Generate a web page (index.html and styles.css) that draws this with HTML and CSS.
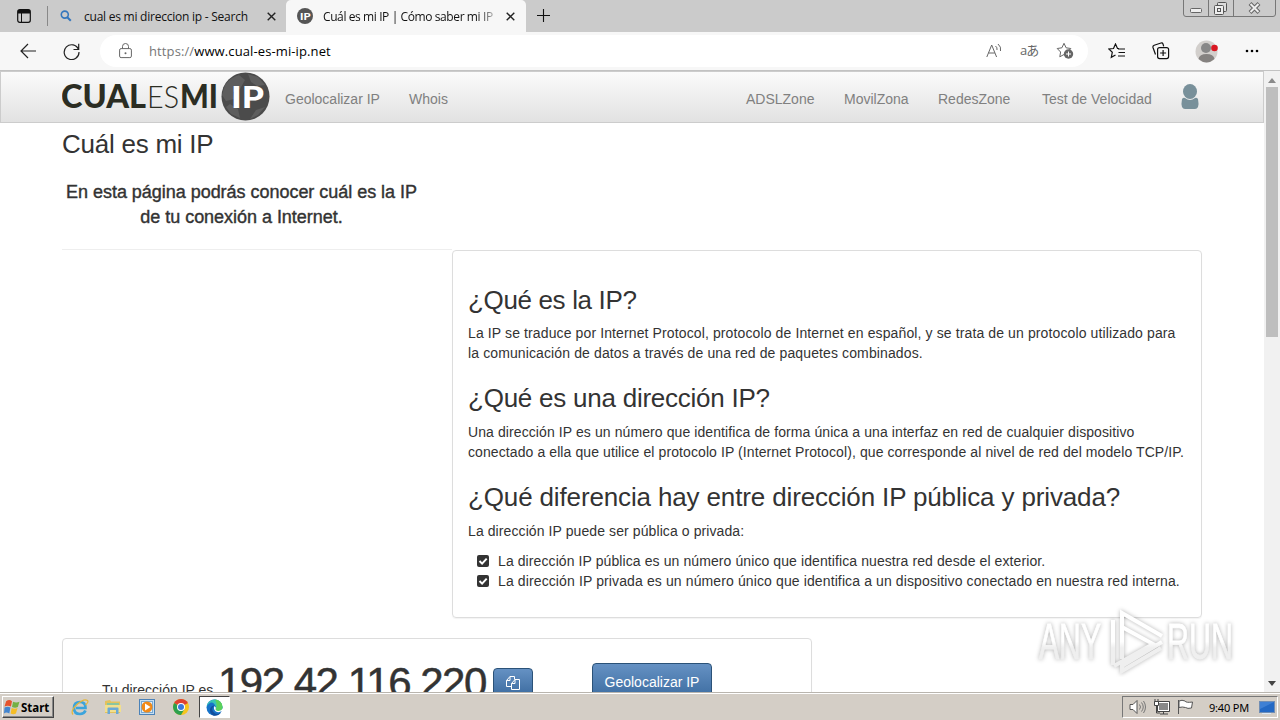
FILE: index.html
```html
<!DOCTYPE html>
<html lang="es">
  <head>
    <meta charset="UTF-8" />
    <title>Cuál es mi IP | Cómo saber mi IP</title>
    <link rel="stylesheet" href="styles.css">
  </head>
  <body>
    <!-- Pestañas -->
    <div class="tabs">
      <svg class="tab-menu" width="14" height="14" viewBox="0 0 14 14"><rect x=".7" y=".7" width="12.6" height="12.6" rx="2" fill="none" stroke="#111" stroke-width="1.2"/><path d="M1 1h12v3.500H1z" fill="#111"/><path d="M4.500 4v9" stroke="#111"/></svg>
      <div class="tab">
        <svg width="12" height="12" viewBox="0 0 12 12"><circle cx="4.800" cy="4.600" r="3.500" fill="none" stroke="#3577bd" stroke-width="1.600"/><path d="M7.300 7.200l3.500 3.500" stroke="#3577bd" stroke-width="2"/></svg>
        <span class="tab-title t1">cual es mi direccion ip - Search</span>
        <svg class="close" width="9" height="9" viewBox="0 0 9 9"><path d="M.7.7l7.600 7.600M8.300.7L.7 8.300" stroke="#222" stroke-width="1.400"/></svg>
      </div>
      <div class="tab active">
        <svg width="16" height="16" viewBox="0 0 16 16"><circle cx="8" cy="8" r="8" fill="#555"/><text x="3" y="12" class="fav" textLength="10.500" lengthAdjust="spacingAndGlyphs">IP</text></svg>
        <span class="tab-title t2">Cuál es mi IP | Cómo saber mi IP</span>
        <svg class="close" width="9" height="9" viewBox="0 0 9 9"><path d="M.7.7l7.600 7.600M8.300.7L.7 8.300" stroke="#222" stroke-width="1.400"/></svg>
      </div>
      <svg class="plus" width="15" height="15" viewBox="0 0 15 15"><path d="M7.500 1v13M1 7.500h13" stroke="#111" stroke-width="1.100"/></svg>
      <svg class="winbtns" width="94" height="18" viewBox="0 0 94 18" fill="none">
        <path d="M.5 0v14q0 2.500 2.500 2.500h87q2.500 0 2.500-2.500V0M25.500 0v16M50.500 0v16" stroke="#777"/>
        <rect x="7.500" y="8.500" width="11" height="4" rx="1" fill="#eee" stroke="#666"/>
        <rect x="34.500" y="2.500" width="9" height="9" rx="1" fill="#ddd" stroke="#555"/>
        <rect x="31.500" y="5.500" width="9" height="9" rx="1" fill="#eee" stroke="#555"/><rect x="34.500" y="8.500" width="3" height="3" stroke="#555"/>
        <path d="M67 3.500l9 9M76 3.500l-9 9" stroke="#666" stroke-width="4"/><path d="M67.500 4l8 8M75.500 4l-8 8" stroke="#eee" stroke-width="2"/>
      </svg>
    </div>

    <!-- Barra de direcciones -->
    <div class="toolbar">
      <svg class="back" width="17" height="16" viewBox="0 0 17 16"><path d="M8 1L1 8l7 7M1 8h15" fill="none" stroke="#222" stroke-width="1.200"/></svg>
      <svg class="reload" width="17" height="17" viewBox="0 0 17 17"><path d="M15.500 6.500A7.400 7.400 0 1 0 16 9M15.700.8v5.700H10.500" fill="none" stroke="#222" stroke-width="1.200"/></svg>
      <div class="address">
        <svg width="13" height="16" viewBox="0 0 13 16"><rect x=".6" y="5.600" width="11.800" height="9" rx="1.500" fill="none" stroke="#666"/><path d="M3.500 5.500V3.500a3 3 0 0 1 6 0v2" fill="none" stroke="#666"/><circle cx="6.500" cy="10.200" r="1" fill="#666"/></svg>
        <span class="url"><span>https://</span>www.cual-es-mi-ip.net</span>
        <svg class="read" width="16" height="16" viewBox="0 0 16 16" fill="none" stroke="#666"><path d="M.8 14L5.700 2l4.900 12M2.600 10h6.200"/><path d="M9.500 3q2 1.500 1.500 4M12 1q3.500 2.800 2.500 7"/></svg>
        <span class="translate">aあ</span>
        <svg class="fav-add" width="18" height="18" viewBox="0 0 18 18"><path d="M8 12.500l-4.200 2.300.8-4.800L1.200 6.500l4.700-.7L8 1.300l2.100 4.500 4.700.7-2 2" fill="none" stroke="#666"/><circle cx="12.500" cy="12" r="4.700" fill="#666"/><path d="M12.500 9.500v5M10 12h5" stroke="#fff"/></svg>
      </div>
      <svg class="favs" width="18" height="16" viewBox="0 0 18 16" fill="none" stroke="#111" stroke-width="1.200"><path d="M11 5.500H9.500L7.500 1 5.500 5.500.8 6l3.500 3.300-1 5L7.500 12M10 6h7M10.500 9.500H17M10 13h7"/></svg>
      <svg class="collections" width="18" height="18" viewBox="0 0 18 18" fill="none" stroke="#111" stroke-width="1.200"><path d="M3.500 12.500L1 5.500Q.6 3.800 2.200 3.200L9 1q1.500-.4 2 1l.7 2.300"/><rect x="5.600" y="5.600" width="11" height="11" rx="2"/><path d="M11.100 8v6M8.100 11h6"/></svg>
      <svg class="avatar" width="24" height="23" viewBox="0 0 24 23"><circle cx="11.500" cy="11.500" r="11" fill="#d2cfcc"/><circle cx="11" cy="8" r="5" fill="#888"/><path d="M3.500 19q1-5 8-5t8 5q-8 7-16 0" fill="#858280"/><circle cx="19.500" cy="8" r="3.300" fill="#d91722"/></svg>
      <svg class="dots" width="14" height="4" viewBox="0 0 14 4"><circle cx="2" cy="2" r="1.300"/><circle cx="7" cy="2" r="1.300"/><circle cx="12" cy="2" r="1.300"/></svg>
    </div>

    <!-- Página -->
    <div class="viewport">
      <div class="page">
        <div class="navbar">
          <svg class="logo" width="209" height="50" viewBox="0 0 209 50">
            <text x="-1" y="36" class="black" textLength="85" lengthAdjust="spacingAndGlyphs">CUAL</text>
            <text x="85" y="36" class="light" textLength="32" lengthAdjust="spacingAndGlyphs">ES</text>
            <text x="118" y="36" class="black" textLength="38" lengthAdjust="spacingAndGlyphs">MI</text>
            <circle cx="183.500" cy="24.500" r="24" fill="#4b4b4b"/>
            <path d="M163 13q6-8 14-10l6 5-5 9-7 3 1 7-8 2-4-6zM186 2l10 3 7 8-8 1-6-4zM168 32l8 5 2 9-9-4-5-7zM194 38l9-3-7 8-8 4z" fill="#5e5e5e"/>
            <text x="169" y="36" class="ip" textLength="33" lengthAdjust="spacingAndGlyphs">IP</text>
          </svg>
          <a class="n1">Geolocalizar IP</a>
          <a class="n2">Whois</a>
          <a class="n3">ADSLZone</a>
          <a class="n4">MovilZona</a>
          <a class="n5">RedesZone</a>
          <a class="n6">Test de Velocidad</a>
          <svg class="user" width="18" height="25" viewBox="0 0 18 25" fill="#78909a"><path d="M1 15q1.500-2 3-1 5 4 10 0 1.500-1 3 1 1 5 0 8-1 2-3 2H4q-2 0-3-2-1-3 0-8z"/><ellipse cx="9" cy="7.500" rx="7" ry="7.500"/></svg>
        </div>
        <div class="container">
          <div class="top">
            <div class="left">
              <h1>Cuál es mi IP</h1>
              <p class="lead">En esta página podrás conocer cuál es la IP<br />de tu conexión a Internet.</p>
              <hr />
            </div>
            <div class="card info">
              <h2 class="q1">¿Qué es la IP?</h2>
              <p><span class="l1">La IP se traduce por Internet Protocol, protocolo de Internet en español, y se trata de un protocolo utilizado para</span><br /><span class="l2">la comunicación de datos a través de una red de paquetes combinados.</span></p>
              <h2 class="q2">¿Qué es una dirección IP?</h2>
              <p><span class="l3">Una dirección IP es un número que identifica de forma única a una interfaz en red de cualquier dispositivo</span><br /><span class="l4">conectado a ella que utilice el protocolo IP (Internet Protocol), que corresponde al nivel de red del modelo TCP/IP.</span></p>
              <h2 class="q3">¿Qué diferencia hay entre dirección IP pública y privada?</h2>
              <p><span class="l5">La dirección IP puede ser pública o privada:</span></p>
              <ul>
                <li><svg width="12" height="12" viewBox="0 0 12 12"><rect width="12" height="12" rx="2" fill="#333"/><path d="M2.500 6l2.600 2.600 4.600-5" fill="none" stroke="#fff" stroke-width="2"/></svg><span class="l6">La dirección IP pública es un número único que identifica nuestra red desde el exterior.</span></li>
                <li><svg width="12" height="12" viewBox="0 0 12 12"><rect width="12" height="12" rx="2" fill="#333"/><path d="M2.500 6l2.600 2.600 4.600-5" fill="none" stroke="#fff" stroke-width="2"/></svg><span class="l7">La dirección IP privada es un número único que identifica a un dispositivo conectado en nuestra red interna.</span></li>
              </ul>
            </div>
          </div>
          <div class="card result">
            <span class="your">Tu dirección IP es</span>
            <span class="number">192.42.116.220</span>
            <a class="btn copy"><svg width="14" height="14" viewBox="0 0 14 14" fill="none" stroke="#fff"><path d="M5 10.500H.5v-6l3.500-4h4.500v3M.5 4.500H4v-4M5.500 7.500l3.500-4h4.500v10h-8zM5.500 7.500H9v-4"/></svg></a>
            <a class="btn geo">Geolocalizar IP</a>
          </div>
        </div>
      </div>
      <div class="scrollbar">
        <svg width="8" height="5" viewBox="0 0 8 5"><path d="M0 5l4-5 4 5z" fill="#8a8a8a"/></svg>
        <div class="thumb"></div>
        <svg width="8" height="5" viewBox="0 0 8 5"><path d="M0 0l4 5 4-5z" fill="#444"/></svg>
      </div>
    </div>

    <!-- Barra de tareas -->
    <div class="taskbar">
      <div class="start">
        <svg width="16" height="16" viewBox="0 0 15 15"><path d="M2 2q3-2 5.500 0L6.500 7q-3-1.500-6 0z" fill="#e5532d"/><path d="M8.500 2.500q3 1.500 6 0l-1.500 5q-2.500 1.500-5.500 0z" fill="#75b043"/><path d="M.5 8q3-1.500 5.500 0l-1 5.500q-3-1.500-5 0z" fill="#4385cf"/><path d="M7.200 8.500q3 1.500 5.500 0l-1.500 5q-2.500 1.500-5 0z" fill="#f5bd25"/></svg>
        <span>Start</span>
      </div>
      <svg class="ie" width="18" height="17" viewBox="0 0 18 17" fill="none"><path d="M14.500 11.500Q13 15 9 15q-6 0-6-6t6-6q5.500 0 5.500 6H5" stroke="#3ba4dc" stroke-width="2.700"/><path d="M2 15.500Q-1 12 6 5.500T16.500 1.500Q18 3 14.500 6" stroke="#e5b63a" stroke-width="1.200"/></svg>
      <svg class="folder" width="16" height="16" viewBox="0 0 16 16"><path d="M0 2l5-1 1 1.500h9V14H0z" fill="#e3c25c"/><path d="M2 4h12v3H2z" fill="#8ac5a0"/><path d="M0 6h16v7H0z" fill="#f2df8d"/><path d="M2.500 15V9.500q0-1 1-1h9q1 0 1 1V15h-2.500v-4H5v4z" fill="#6ba9d6"/></svg>
      <svg class="media" width="16" height="16" viewBox="0 0 16 16"><rect x=".5" y=".5" width="15" height="15" fill="#c6dff2" stroke="#4b82b8"/><rect x="2.500" y="2.500" width="11" height="11" fill="#e6f1fa" stroke="#78a9d3"/><circle cx="8" cy="8" r="5.500" fill="#f18a18"/><path d="M6 4.500l5.500 3.500L6 11.500z" fill="#fff"/></svg>
      <svg class="chrome" width="16" height="16" viewBox="0 0 16 16"><circle cx="8" cy="8" r="8" fill="#f6c51e"/><path d="M8 8L1.100 4A8 8 0 0 1 14.900 4z" fill="#df4232"/><path d="M1.100 4A8 8 0 0 0 8 16l3.500-6z" fill="#2da04e"/><circle cx="8" cy="8" r="4" fill="#fff"/><circle cx="8" cy="8" r="3" fill="#3b79dc"/></svg>
      <div class="running">
        <svg width="17" height="17" viewBox="0 0 17 17"><circle cx="8.500" cy="8.500" r="8" fill="#1673c9"/><path d="M.6 7.500A8 8 0 0 1 16.500 8q.2 4-4.500 4-2.500 0-2.500-1.500Q11 9.500 10 8 6-.5.6 7.500z" fill="#38c4b4"/><path d="M9 .5q7 .5 7.500 7.500 0 4-4.500 4-2.500 0-2.500-1.500Q12 6 9 .5z" fill="#5bd15b"/><path d="M8.500 6.500Q4 10 8.500 14q3 2 6.500-.5-3 4-8 3Q2 13 5 8q1.500-2 3.500-1.500z" fill="#124f9c"/><path d="M8.500 7q-1.500 3 1 5.200 3 1.800 6.200.1l1.300 1V9.500l-1 1q-2 2-5 1.300-2-.5-1.300-1.800Q10.500 8.500 8.500 7z" fill="#fff"/></svg>
      </div>
      <div class="tray">
        <svg width="17" height="16" viewBox="0 0 17 16" fill="none" stroke="#555"><path d="M1 5.500h3l4-4v13l-4-4H1z" fill="#fff"/><path d="M10.500 5.500q2 2.500 0 5M12.500 3.500q3.500 4.500 0 9M14.500 2q4 6 0 12" stroke="#777"/></svg>
        <svg width="17" height="16" viewBox="0 0 17 16"><rect x="5.500" y="3.500" width="10" height="8" fill="#888" stroke="#fff"/><path d="M4.500 2.500h12v10h-12zM7 15h8M10.500 12.500V15M3.500 7v7H7" fill="none" stroke="#444"/><path d="M1.500 2.500h4v4h-4zM2 0v3M5 0v3" fill="#fff" stroke="#444"/></svg>
        <svg width="17" height="16" viewBox="0 0 17 16"><path d="M1.500 1v14M2 2q3-1.500 6 0 1 2 7.500 1l-1 6q-4 1-6-.5-3-1-6.500 0z" fill="#fff" stroke="#555"/></svg>
        <span class="clock">9:40 PM</span>
        <svg class="desk" width="16" height="13" viewBox="0 0 16 13"><rect x=".5" y=".5" width="15" height="11" fill="#2469c4" stroke="#718eb4"/><path d="M1 1h14L1 8z" fill="#3f80d4"/><path d="M3 12.500h9" stroke="#dbe8f5"/></svg>
      </div>
    </div>

    <!-- Marca de agua -->
    <svg class="watermark" width="204" height="72" viewBox="0 0 204 72">
      <defs>
        <linearGradient id="fade" gradientUnits="userSpaceOnUse" x1="0" y1="5" x2="0" y2="68">
          <stop offset=".5" stop-color="#fff"/>
          <stop offset=".6" stop-color="#efefef"/>
        </linearGradient>
      </defs>
      <g class="wm">
        <text x="5" y="54" textLength="62" lengthAdjust="spacingAndGlyphs">ANY</text>
        <text x="133" y="54" textLength="66" lengthAdjust="spacingAndGlyphs">RUN</text>
        <path d="M79 60V15M88 54V8L128 31M88 22l31 17-39 22M128 37L88 61v5l39-23"/>
      </g>
    </svg>
  </body>
</html>
```

FILE: styles.css
```css
* {
  box-sizing: border-box;
}
body {
  margin: 0;
  width: 1280px;
  height: 720px;
  overflow: hidden;
  position: relative;
  display: flex;
  flex-direction: column;
  background: #fff;
  color: #333;
  font-family: 'Liberation Sans', Arial, sans-serif;
  font-size: 14px;
}
svg {
  display: block;
  flex: none;
}
a,
span {
  white-space: nowrap;
}

/* Pestañas */
.tabs {
  height: 32px;
  display: flex;
  align-items: flex-start;
  background: #cbcbcb;
  font: 12px 'Open Sans', 'Noto Sans', sans-serif;
  color: #111;
}
.tab-menu {
  margin: 9px 16px 0 17px;
}
.tab {
  width: 239px;
  height: 32px;
  display: flex;
  align-items: center;
  padding: 0 10px 0 13px;
  position: relative;
}
.tab:not(.active)::before {
  content: '';
  position: absolute;
  left: 0;
  top: 6px;
  height: 20px;
  border-left: 1px solid #888;
}
.tab.active {
  width: 240px;
  background: #f7f7f7;
  border-radius: 5px 5px 0 0;
  padding: 0 11px;
}
.tab-title {
  margin-left: 12px;
}
.t1 {
  letter-spacing: -0.24px;
}
.active .tab-title {
  margin-left: 10px;
  width: 171px;
  letter-spacing: -0.4px;
  -webkit-mask-image: linear-gradient(90deg, #000 90%, rgba(0, 0, 0, 0.3));
}
.close {
  margin-left: auto;
}
.fav {
  font: 900 10px Lato, sans-serif;
  fill: #fff;
}
.plus {
  margin: 8px 0 0 10px;
}
.winbtns {
  margin: 0 3px 0 auto;
}

/* Barra de direcciones */
.toolbar {
  height: 39px;
  display: flex;
  align-items: center;
  background: #f7f7f7;
  border-bottom: 1px solid #c2c2c2;
}
.back {
  margin-left: 20px;
}
.reload {
  margin-left: 26px;
}
.address {
  width: 988px;
  height: 32px;
  margin-left: 20px;
  padding: 0 14px 0 19px;
  display: flex;
  align-items: center;
  background: #fff;
  border-radius: 16px;
}
.url {
  margin-left: 17px;
  font: 13px 'Open Sans', 'Noto Sans', sans-serif;
  letter-spacing: 0.11px;
  color: #000;
}
.url span {
  color: #777;
}
.read {
  margin-left: auto;
}
.translate {
  width: 18px;
  margin: -4px 18px 0;
  font: 13px 'Open Sans', 'Noto Sans CJK JP', sans-serif;
  letter-spacing: -1px;
  color: #666;
}
.favs {
  margin-left: 20px;
}
.collections {
  margin-left: 26px;
}
.avatar {
  margin-left: 25px;
}
.dots {
  margin-left: 26px;
}

/* Página */
.viewport {
  height: 621px;
  display: flex;
  overflow: hidden;
}
.page {
  width: 1264px;
}
.navbar {
  height: 52px;
  padding: 0 64px 0 61px;
  display: flex;
  align-items: center;
  background: linear-gradient(#fbfbfb, #e2e2e2);
  border: 1px solid #ccc;
}
.navbar a {
  color: #808080;
  padding-top: 4px;
}
.user {
  margin-top: -2px;
}
.black {
  font: 900 32px Lato, sans-serif;
  fill: #2b2d23;
}
.light {
  font: 300 32px Lato, sans-serif;
  fill: #2b2d23;
}
.ip {
  font: 900 31px Lato, sans-serif;
  fill: #fff;
}
.n1 {
  width: 123px;
  margin-left: 14px;
}
.n2 {
  padding-left: 1px;
}
.n3 {
  width: 98px;
  margin-left: auto;
}
.n4 {
  width: 94px;
}
.n5 {
  width: 104px;
}
.n6 {
  width: 139px;
}
.container {
  padding-left: 62px;
}
.top {
  display: flex;
}
.left {
  width: 390px;
}
h1,
h2 {
  margin: 0;
  font-size: 26px;
  font-weight: normal;
  line-height: 30px;
  white-space: nowrap;
}
h1 {
  margin-top: 6px;
  letter-spacing: -0.25px;
}
.lead {
  width: 359px;
  margin: 21px 0 19px;
  font-size: 18px;
  line-height: 25px;
  letter-spacing: -0.03px;
  text-align: center;
  -webkit-text-stroke: 0.4px #333;
}
hr {
  margin: 0;
  border: 0;
  border-top: 1px solid #eee;
}
.card {
  width: 750px;
  border: 1px solid #ddd;
  border-radius: 4px;
  box-shadow: 0 1px 1px rgba(0, 0, 0, 0.05);
}
.info {
  height: 368px;
  margin-top: 127px;
  padding: 34px 15px 0;
}
p {
  line-height: 20px;
}
.info h2 {
  height: 30px;
}
.info h2 + p {
  margin: 8px 0 21px;
}
.info .q2,
.info .q3 {
  height: 31px;
  margin-top: -1px;
}
.q1 {
  letter-spacing: -0.35px;
}
.q2 {
  letter-spacing: -0.24px;
}
.q3 {
  letter-spacing: -0.14px;
}
.l1,
.l2,
.l7 {
  letter-spacing: 0.118px;
}
.l3,
.l4,
.l5,
.l6 {
  letter-spacing: 0.093px;
}
ul {
  margin: -11px 0 0;
  padding: 0 0 0 9px;
  list-style: none;
}
li {
  display: flex;
  align-items: center;
  gap: 9px;
  height: 20px;
}
.result {
  height: 120px;
  margin-top: 20px;
  padding: 24px 0 0 39px;
  display: flex;
  align-items: flex-start;
}
.your {
  width: 116px;
  margin-top: 19px;
}
.number {
  width: 275px;
  font-size: 42px;
  line-height: 40px;
  letter-spacing: -1.5px;
  -webkit-text-stroke: 0.5px #333;
}
.btn {
  height: 38px;
  display: flex;
  align-items: center;
  justify-content: center;
  border: 1px solid #2b5278;
  border-radius: 4px;
  background: linear-gradient(#6591c3, #3a6a9e);
  color: #fff;
}
.copy {
  width: 40px;
  height: 30px;
  margin-top: 5px;
}
.geo {
  width: 120px;
  margin-left: 59px;
}
.scrollbar {
  width: 16px;
  display: flex;
  flex-direction: column;
  align-items: center;
  justify-content: space-between;
  padding: 7px 0 6px;
  background: #f1f1f1;
}
.thumb {
  width: 12px;
  height: 250px;
  margin: 4px 0 auto;
  background: #bebebe;
}

/* Barra de tareas */
.taskbar {
  height: 28px;
  padding: 3px 2px 2px;
  display: flex;
  align-items: center;
  background: #d4cec6;
  border-top: 1px solid #b9b5ae;
  box-shadow: inset 0 1px #fff;
}
.start {
  width: 52px;
  height: 22px;
  padding-left: 1px;
  display: flex;
  align-items: center;
  gap: 1px;
  border: 1px solid;
  border-color: #fff #444 #444 #fff;
  box-shadow: inset -1px -1px #888;
  font: bold 11.500px 'Noto Sans', sans-serif;
  color: #000;
}
.ie {
  margin-left: 17px;
}
.folder {
  margin-left: 16px;
}
.media {
  margin-left: 18px;
}
.chrome {
  margin-left: 18px;
}
.running {
  width: 31px;
  height: 22px;
  margin-left: 10px;
  display: flex;
  align-items: center;
  justify-content: center;
  background: #fff;
  border: 1px solid;
  border-color: #444 #fff #fff #444;
}
.tray {
  width: 156px;
  height: 22px;
  margin-left: auto;
  padding-left: 6px;
  display: flex;
  align-items: center;
  gap: 7px;
  border: 1px solid;
  border-color: #777 #fff #fff #777;
}
.clock {
  width: 43px;
  margin-left: 8px;
  font: 11px 'Noto Sans', sans-serif;
  letter-spacing: -0.2px;
  color: #000;
}

/* Marca de agua */
.watermark {
  position: absolute;
  left: 1034px;
  top: 605px;
}
.wm {
  filter: drop-shadow(0 0 2px rgba(0, 0, 0, 0.3));
}
.wm text {
  font: 50px 'Liberation Sans', Arial, sans-serif;
  fill: url(#fade);
  stroke: url(#fade);
  stroke-width: 0.8;
}
.wm path {
  fill: none;
  stroke: url(#fade);
  stroke-width: 4;
}
```
